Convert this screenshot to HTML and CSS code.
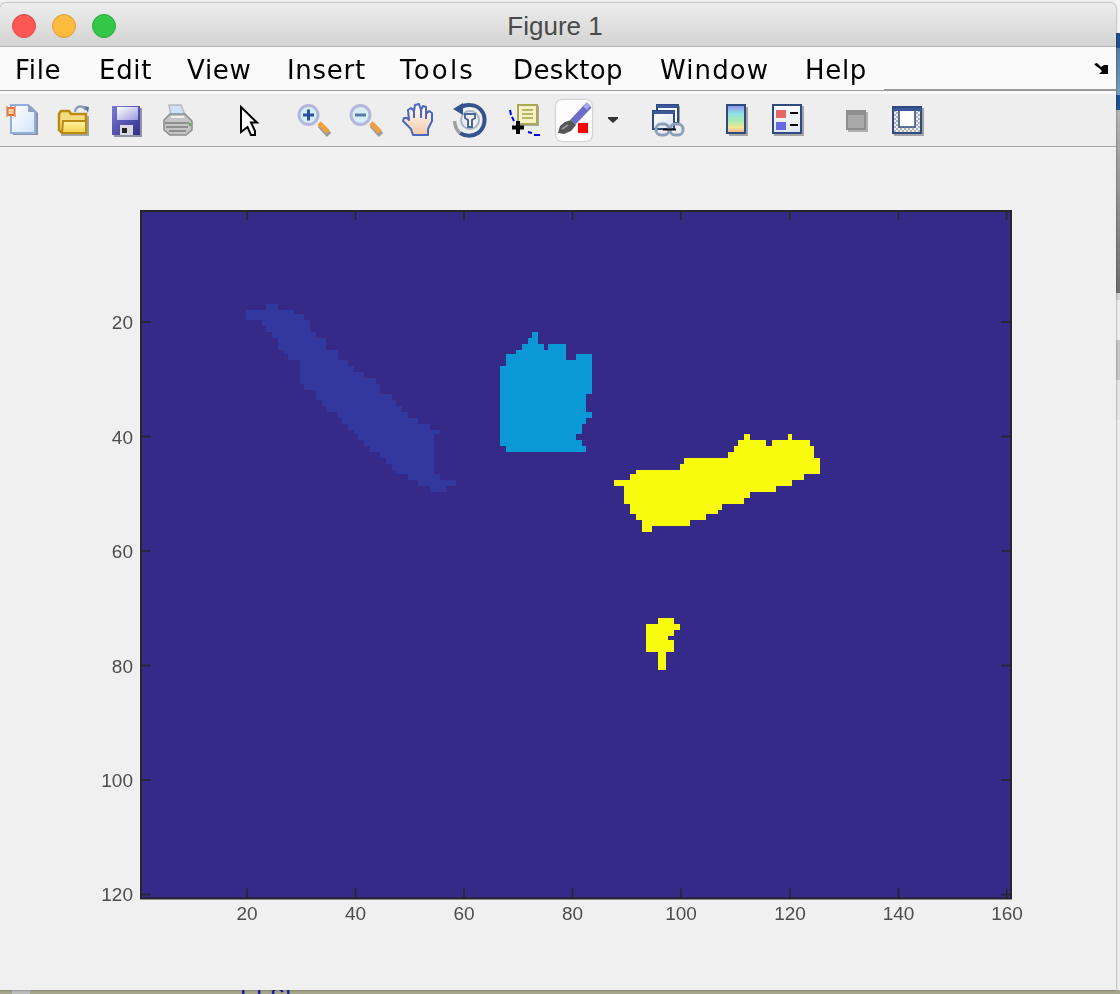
FILE: index.html
```html
<!DOCTYPE html>
<html lang="en">
<head>
<meta charset="utf-8">
<title>Figure 1</title>
<link rel="stylesheet" href="styles.css">
</head>
<body>
<div class="desktop">
  <div class="behind-title">MATLAB R2016b</div>
  <div class="behind-right">
    <i class="seg s1"></i><i class="seg s2"></i><i class="seg s3"></i><i class="seg s4"></i><i class="seg s5"></i><i class="seg s6"></i><i class="seg s7"></i><i class="seg s8"></i><i class="seg s9"></i><i class="seg s10"></i>
  </div>
  <div class="behind-bottom"><span class="gutter"></span><span class="code">ELSE</span></div>

  <div class="window">
    <header class="titlebar">
      <div class="lights"><span class="light red"></span><span class="light yellow"></span><span class="light green"></span></div>
      <div class="title">Figure 1</div>
    </header>

    <nav class="menubar">
      <div class="menu-items"><span>File</span><span>Edit</span><span>View</span><span>Insert</span><span class="wide">Tools</span><span class="snug">Desktop</span><span class="loose">Window</span><span>Help</span></div>
      <div class="menu-end">
        <svg class="dock" width="14" height="11" viewBox="0 0 14 11"><path d="M0 1 3 0 5 2 7 4 10 2H14V11H5L8 8 5 5 2 3Z" fill="#000"/></svg>
      </div>
    </nav>
    <div class="menu-gap"></div>

    <div class="toolbar">
      <!-- new -->
      <span class="slot first"><svg width="36" height="36" viewBox="0 0 36 36">
        <defs><linearGradient id="gDoc" x1="0" y1="0" x2="1" y2="1"><stop offset="0" stop-color="#fff"/><stop offset="1" stop-color="#d5e4f8"/></linearGradient></defs>
        <path d="M9 4H27L34 11V33H9Z" fill="#8c90a6"/>
        <path d="M7 3H24L31 10V31H7Z" fill="url(#gDoc)" stroke="#8fb0dc" stroke-width="2"/>
        <path d="M24 2V10H32Z" fill="#8fa0cc"/>
        <rect x="3.500" y="6" width="7" height="7" fill="#f9d2a8" stroke="#e2763c" stroke-width="2"/>
        <path d="M2 4h2v2H2zM10 4h2v2h-2zM2 13h2v2H2zM10 13h2v2h-2z" fill="#f0a070"/>
      </svg></span>
      <!-- open -->
      <span class="slot"><svg width="36" height="36" viewBox="0 0 36 36">
        <defs><linearGradient id="gFold" x1="0" y1="0" x2="0" y2="1"><stop offset="0" stop-color="#fff4a8"/><stop offset="1" stop-color="#f6d24a"/></linearGradient></defs>
        <path d="M20 10C21 3 28 3 31 8" fill="none" stroke="#8ea0b8" stroke-width="2.500"/>
        <path d="M29 4 34 5 33 11Z" fill="#5a78a0"/>
        <path d="M6 34H34V14H8Z" fill="#a0a8b0"/>
        <path d="M4 12 6 9H14L16 12H31V31H7L4 28Z" fill="#f4dc80" stroke="#b98a10" stroke-width="2.500"/>
        <path d="M8 19H31V31H7Z" fill="url(#gFold)" stroke="#b98a10" stroke-width="2"/>
      </svg></span>
      <!-- save -->
      <span class="slot mid"><svg width="36" height="36" viewBox="0 0 36 36">
        <defs>
          <linearGradient id="gDisk" x1="0" y1="0" x2="1" y2="1"><stop offset="0" stop-color="#7a7ad8"/><stop offset="1" stop-color="#30308a"/></linearGradient>
          <linearGradient id="gLab" x1="0" y1="0" x2="1" y2="1"><stop offset="0" stop-color="#fff"/><stop offset="1" stop-color="#9a9ade"/></linearGradient>
        </defs>
        <rect x="5" y="6" width="28" height="29" fill="#8e93a8"/>
        <rect x="3" y="4" width="28" height="29" fill="url(#gDisk)"/>
        <rect x="8" y="5" width="21" height="13" fill="url(#gLab)"/>
        <rect x="11" y="23" width="13" height="10" fill="#d8d8e0"/>
        <rect x="13" y="26" width="5" height="5" fill="#222"/>
      </svg></span>
      <!-- print -->
      <span class="slot"><svg width="36" height="36" viewBox="0 0 36 36">
        <path d="M9 3H21L25 13H11Z" fill="#cfe2f8" stroke="#b4bac2" stroke-width="1.500"/>
        <path d="M4 18 10 12H25L32 19V28L26 33H10L4 28Z" fill="#c4c4c4" stroke="#8c8c8c" stroke-width="1.500"/>
        <path d="M5 21H29M6 25H28M9 29H26" stroke="#7e7e7e" stroke-width="1.500" fill="none"/>
        <path d="M11 15H24" stroke="#f0f0f0" stroke-width="2"/>
        <rect x="29" y="21" width="2" height="3" fill="#5aa85a"/>
      </svg></span>
      <!-- pointer -->
      <span class="slot gap-19"><svg class="sharp" width="36" height="36" viewBox="0 0 36 36">
        <path d="M10 5 26 20.500H20L24 29V33H20L16.500 25 10 30Z" fill="#fff" stroke="#000" stroke-width="2"/>
      </svg></span>
      <!-- zoom in -->
      <span class="slot gap-13"><svg width="36" height="36" viewBox="0 0 36 36">
        <path d="M23 22 32 32" stroke="#9a9a9a" stroke-width="6" transform="translate(1 1)"/>
        <path d="M23 21 32 30" stroke="#f0a040" stroke-width="5"/>
        <circle cx="12.500" cy="13" r="9.500" fill="#d4edf6" stroke="#b4b6dc" stroke-width="3"/>
        <path d="M7 13H18M12.500 7.500V18.500" stroke="#2e4f9c" stroke-width="3"/>
      </svg></span>
      <!-- zoom out -->
      <span class="slot"><svg width="36" height="36" viewBox="0 0 36 36">
        <path d="M23 22 32 32" stroke="#9a9a9a" stroke-width="6" transform="translate(1 1)"/>
        <path d="M23 21 32 30" stroke="#f0a040" stroke-width="5"/>
        <circle cx="12.500" cy="13" r="9.500" fill="#d4edf6" stroke="#b4b6dc" stroke-width="3"/>
        <path d="M7 13H18" stroke="#5d7ba0" stroke-width="3"/>
      </svg></span>
      <!-- hand -->
      <span class="slot"><svg width="36" height="36" viewBox="0 0 36 36">
        <defs><linearGradient id="gHand" x1="0" y1="0" x2="0" y2="1"><stop offset="0" stop-color="#fff"/><stop offset="1" stop-color="#f3c9a6"/></linearGradient></defs>
        <path d="M13 33 11 27 3 19 4 16H7L9 18 8 8 11 6 14 9 15 3 19 2 21 8 23 4 26 5V12L29 9 32 11V19L28 27V33Z" fill="url(#gHand)" stroke="#4a68c0" stroke-width="2" stroke-linejoin="round"/>
        <path d="M14 9V16M21 8V16M26 12V17" stroke="#4a68c0" stroke-width="2" fill="none"/>
      </svg></span>
      <!-- rotate -->
      <span class="slot"><svg width="36" height="36" viewBox="0 0 36 36">
        <circle cx="18" cy="18" r="9" fill="none" stroke="#aab4c4" stroke-width="2"/>
        <path d="M9 5C14 2 24 2 29 8 35 15 33 26 26 31 20 35 12 34 8 31" fill="none" stroke="#34538c" stroke-width="4"/>
        <path d="M8 31C4 28 3 24 2.500 19" fill="none" stroke="#a0a0a0" stroke-width="3.500"/>
        <path d="M1 7 11 1V13Z" fill="#34538c"/>
        <path d="M13 12H23V16L20 18V25H16V18L13 16Z" fill="none" stroke="#4a6a9a" stroke-width="2"/>
      </svg></span>
      <!-- data cursor -->
      <span class="slot"><svg width="36" height="36" viewBox="0 0 36 36">
        <rect x="16" y="4" width="19" height="20" fill="#aaa"/>
        <rect x="14" y="3" width="19" height="19" fill="#f6f2c4" stroke="#a8a858" stroke-width="2"/>
        <path d="M18 8H29M18 12H29M18 16H29" stroke="#b8b868" stroke-width="2"/>
        <path d="M6 8 7 13M8 15 10 19M24 30 28 31M30 33H36" stroke="#0000e6" stroke-width="2" fill="none"/>
        <path d="M8 25.500H20M14 19V32" stroke="#000" stroke-width="4"/>
      </svg></span>
      <!-- brush -->
      <span class="slot"><span class="brush-btn"><svg width="36" height="41" viewBox="0 0 36 41">
        <path d="M33 5 17 22" stroke="#6c6cc8" stroke-width="7"/>
        <path d="M33 4 29 8" stroke="#a8a8e8" stroke-width="5"/>
        <path d="M15 20 20 25 15 31 8 34 2 33 4 26 9 22Z" fill="#555"/>
        <path d="M6 29 12 25" stroke="#999" stroke-width="2"/>
        <rect x="22" y="23" width="10" height="10" fill="#f00"/>
      </svg></span></span>
      <!-- dropdown -->
      <span class="drop"><svg width="10" height="6" viewBox="0 0 10 6"><path d="M0 0H10V1.500L5 6 0 1.500Z" fill="#333"/></svg></span>
      <!-- link -->
      <span class="slot gap-24"><svg width="36" height="36" viewBox="0 0 36 36">
        <defs><linearGradient id="gWin" x1="0" y1="0" x2="1" y2="1"><stop offset="0" stop-color="#fff"/><stop offset="1" stop-color="#dbe3f3"/></linearGradient></defs>
        <rect x="8" y="4" width="22" height="18" fill="#9aa0a8"/>
        <rect x="7" y="3" width="21" height="18" fill="#fff" stroke="#2f4a80" stroke-width="2"/>
        <rect x="7" y="3" width="21" height="3" fill="#3b5a9c"/>
        <rect x="3" y="9" width="21" height="18" fill="url(#gWin)" stroke="#2f4a80" stroke-width="2"/>
        <rect x="3" y="9" width="21" height="3" fill="#3b5a9c"/>
        <rect x="6" y="22" width="13" height="11" rx="5" fill="none" stroke="#8d9fba" stroke-width="3"/>
        <rect x="20" y="22" width="13" height="11" rx="5" fill="none" stroke="#8d9fba" stroke-width="3"/>
        <path d="M13 27.500H26" stroke="#111" stroke-width="2"/>
      </svg></span>
      <!-- colorbar -->
      <span class="slot gap-17"><svg width="36" height="36" viewBox="0 0 36 36">
        <defs><linearGradient id="gBar" x1="0" y1="0" x2="0" y2="1"><stop offset="0" stop-color="#8c8ce4"/><stop offset=".3" stop-color="#90e0e8"/><stop offset=".55" stop-color="#a4ecb0"/><stop offset=".8" stop-color="#f2e894"/><stop offset="1" stop-color="#eeaa88"/></linearGradient></defs>
        <rect x="10" y="5" width="19" height="29" fill="#a4a4a4"/>
        <rect x="8" y="3" width="18" height="28" fill="url(#gBar)" stroke="#2f4a80" stroke-width="2"/>
      </svg></span>
      <!-- legend -->
      <span class="slot tight"><svg width="36" height="36" viewBox="0 0 36 36">
        <defs><linearGradient id="gLeg" x1="0" y1="0" x2="0" y2="1"><stop offset="0" stop-color="#fff"/><stop offset="1" stop-color="#dde5f5"/></linearGradient></defs>
        <rect x="4" y="4" width="30" height="30" fill="#a4a4a4"/>
        <rect x="3" y="3" width="28" height="28" fill="url(#gLeg)" stroke="#2f4a80" stroke-width="2"/>
        <rect x="6" y="8" width="10" height="8" fill="#e66666"/>
        <rect x="6" y="20" width="10" height="8" fill="#6868e2"/>
        <path d="M20 11H28M20 23H28" stroke="#000" stroke-width="2"/>
      </svg></span>
      <!-- gray -->
      <span class="slot gap-17"><svg width="36" height="36" viewBox="0 0 36 36">
        <rect x="9" y="10" width="20" height="20" fill="#b0b0b0"/>
        <rect x="7" y="8" width="20" height="20" fill="#8f8f8f"/>
        <rect x="9" y="13" width="16" height="13" fill="#a8a8a8"/>
      </svg></span>
      <!-- plot tools -->
      <span class="slot tight"><svg width="36" height="36" viewBox="0 0 36 36">
        <defs><pattern id="pCheck" width="4" height="4" patternUnits="userSpaceOnUse"><rect width="4" height="4" fill="#eee"/><rect width="2" height="2" fill="#b0b0b0"/><rect x="2" y="2" width="2" height="2" fill="#b0b0b0"/></pattern></defs>
        <rect x="4" y="6" width="30" height="28" fill="#a4a4a4"/>
        <rect x="3" y="5" width="28" height="26" fill="url(#pCheck)" stroke="#2f4a80" stroke-width="2"/>
        <rect x="3" y="6" width="28" height="3" fill="#3b5a9c"/>
        <rect x="9" y="9" width="16" height="16" fill="#fff"/>
        <path d="M9 9V25H25V9" fill="none" stroke="#2f4a80" stroke-width="1.500"/>
      </svg></span>
    </div>
    <div class="toolbar-gap"></div>

    <main class="figure">
      <svg class="plot" width="1116" height="842" viewBox="0 148 1116 842">
        <rect class="axes-fill" x="141" y="211" width="870" height="687.500"/>
        <g transform="translate(230 295) scale(.33333)">
          <path class="blob-navy" d="M108 27H144V45H192V57H222V75H240V111H258V129H288V165H324V195H354V213H372V231H402V249H438V267H450V297H486V315H498V333H516V351H534V369H564V387H600V405H630V417H612V537H630V555H678V573H648V591H600V573H564V555H534V537H498V525H486V507H468V489H450V471H420V453H402V435H384V417H372V405H354V387H336V369H324V351H288V333H276V315H258V285H222V267H210V195H174V177H162V165H144V129H126V111H108V93H96V75H48V45H108Z"/>
        </g>
        <g transform="translate(490 320) scale(.33333)">
          <path class="blob-cyan" d="M126 36H144V72H162V90H174V72H228V120H258V102H306V222H288V276H306V294H288V312H276V342H258V360H276V378H288V396H48V378H30V138H48V102H78V90H96V72H114V54H126Z"/>
        </g>
        <g transform="translate(605 425) scale(.33333)">
          <path class="blob-yellow" d="M417 27H435V45H483V63H501V45H549V27H561V45H615V63H627V99H645V147H597V165H561V183H513V201H435V219H417V237H351V255H339V267H303V285H255V303H141V321H111V285H93V267H75V237H57V183H27V165H75V147H93V135H225V117H237V99H369V81H387V63H399V45H417Z"/>
        </g>
        <g transform="translate(630 605) scale(.33333)">
          <path class="blob-yellow" d="M84 39H132V57H150V75H132V93H114V105H132V141H108V195H84V141H48V57H84Z"/>
        </g>

        <path class="ticks" d="M247 211V220M355.500 211V220M464 211V220M572.500 211V220M681 211V220M790 211V220M898.500 211V220M1006.700 211V220
          M247 898V888.500M355.500 898V888.500M464 898V888.500M572.500 898V888.500M681 898V888.500M790 898V888.500M898.500 898V888.500M1006.700 898V888.500
          M141 322H151M141 436.500H151M141 551H151M141 665.500H151M141 780H151M141 894.600H151
          M1011 322H1001M1011 436.500H1001M1011 551H1001M1011 665.500H1001M1011 780H1001M1011 894.600H1001"/>
        <rect class="axes-box" x="141" y="211" width="870" height="687.500"/>

        <g class="xlabels">
          <text x="247" y="920">20</text><text x="355.500" y="920">40</text><text x="464" y="920">60</text><text x="572.500" y="920">80</text><text x="681" y="920">100</text><text x="790" y="920">120</text><text x="898.500" y="920">140</text><text x="1007" y="920">160</text>
        </g>
        <g class="ylabels">
          <text x="133" y="329">20</text><text x="133" y="443.500">40</text><text x="133" y="558">60</text><text x="133" y="672.500">80</text><text x="133" y="787">100</text><text x="133" y="901">120</text>
        </g>
      </svg>
    </main>
  </div>
</div>
</body>
</html>
```
FILE: styles.css
```css
* { box-sizing: border-box; }
html, body { margin: 0; padding: 0; }
.desktop {
  position: relative;
  width: 1120px;
  height: 994px;
  overflow: hidden;
  background: #f2f2f2;
}
.behind-title {
  position: absolute;
  top: -15px;
  left: 465px;
  font: 16px/18px "Liberation Sans", sans-serif;
  letter-spacing: 2px;
  color: #777;
}
.behind-right {
  position: absolute;
  top: 0;
  right: 0;
  width: 4px;
  height: 994px;
  display: flex;
  flex-direction: column;
}
.seg { display: block; }
.s1 { height: 33px; background: #f4f4f4; }
.s2 { height: 15px; background: #1c4f8c; }
.s3 { height: 47px; background: linear-gradient(#4f7dab, #7c9cbd); }
.s4 { height: 15px; background: #1d5190; }
.s5 { height: 183px; background: linear-gradient(#b4b4b4, #6e6e6e); }
.s6 { height: 7px; background: #d4d4d4; }
.s7 { height: 40px; background: #eeeeee; }
.s8 { height: 40px; background: #c8c8c8; }
.s9 { height: 40px; background: #e6e6e6; }
.s10 { flex: 1; background: #efefef; }
.behind-bottom {
  position: absolute;
  left: 0;
  bottom: 0;
  width: 100%;
  height: 4px;
  background: #a6a68c;
  overflow: hidden;
}
.gutter {
  position: absolute;
  left: 12px;
  top: 0;
  width: 18px;
  height: 4px;
  background: #bcbcbc;
}
.code {
  position: absolute;
  left: 240px;
  top: -5px;
  font: 25px/28px "Liberation Mono", monospace;
  color: #1a1aa6;
}

.window {
  position: absolute;
  top: 3px;
  left: 0;
  width: 1116px;
  height: 987px;
  display: flex;
  flex-direction: column;
  background: #f0f0f0;
  border-radius: 6px 6px 0 0;
  box-shadow: 0 0 2px rgba(40, 40, 40, .75);
  overflow: hidden;
}
.titlebar {
  position: relative;
  height: 44px;
  flex: none;
  padding-top: 4px;
  background: linear-gradient(#ededed, #d3d3d3);
  border-bottom: 1px solid #b4b4b4;
}
.lights {
  position: absolute;
  left: 12px;
  top: 11px;
  display: flex;
  gap: 16px;
}
.light {
  width: 24px;
  height: 24px;
  border-radius: 50%;
  border: 1px solid;
}
.red { background: #fc5753; border-color: #df4744; }
.yellow { background: #fdbc40; border-color: #de9f34; }
.green { background: #33c748; border-color: #27aa35; }
.title {
  padding-right: 6px;
  text-align: center;
  font: 26px/39px "Liberation Sans", sans-serif;
  color: #4a4a4a;
}

.menubar {
  height: 44px;
  flex: none;
  display: flex;
  background: #fafafa;
}
.menu-items {
  width: 884px;
  flex: none;
  display: grid;
  grid-template-columns: 84px 88px 100px 113px 113px 147px 145px auto;
  justify-content: start;
  padding: 4px 0 0 15px;
  font: 26px/39px "DejaVu Sans", sans-serif;
  letter-spacing: .7px;
  color: #000;
  border-bottom: 1px solid #9a9a9a;
}
.menu-items span { filter: blur(.25px); white-space: nowrap; }
.menu-items .wide { letter-spacing: 2.200px; }
.menu-items .snug { letter-spacing: .4px; }
.menu-items .loose { letter-spacing: 1.100px; }
.menu-end {
  flex: 1;
  display: flex;
  justify-content: flex-end;
  align-items: flex-start;
  padding: 16px 8px 0 0;
  border-bottom: 2px solid #989898;
}
.menu-gap { height: 3px; flex: none; background: #fafafa; }

.toolbar {
  height: 52px;
  flex: none;
  display: flex;
  align-items: center;
  background: #eeeeee;
}
.slot {
  width: 52px;
  height: 52px;
  flex: none;
  display: flex;
  align-items: center;
  justify-content: center;
}
.slot svg { filter: blur(.35px); }
.slot svg.sharp { filter: none; }
.first { margin-left: -4px; margin-right: -1px; }
.mid { margin-left: 2px; margin-right: -1px; }
.gap-19 { margin-left: 19px; }
.gap-13 { margin-left: 13px; }
.gap-24 { margin-left: 24px; }
.gap-17 { margin-left: 17px; }
.tight { margin-left: -1px; }
.brush-btn {
  width: 36px;
  height: 41px;
  display: flex;
  background: #fcfcfc;
  border-radius: 6px;
  box-shadow: 0 0 2px rgba(0, 0, 0, .4);
}
.drop {
  margin-left: 8px;
  width: 10px;
  height: 6px;
  display: flex;
}
.toolbar-gap {
  height: 2px;
  flex: none;
  background: #f6f6f6;
  border-top: 1px solid #a3a3a3;
}

.figure { flex: 1; display: flex; min-height: 0; }
.plot { display: block; flex: none; }
.axes-fill { fill: #352a87; }
.axes-box { fill: none; stroke: #262626; stroke-width: 2; }
.ticks { fill: none; stroke: #262626; stroke-width: 1.5; }
.blob-navy { fill: #33389e; }
.blob-cyan { fill: #0b99d5; }
.blob-yellow { fill: #f9fb0e; }
.xlabels text, .ylabels text {
  font: 19px "Liberation Sans", sans-serif;
  fill: #4d4d4d;
  filter: blur(.35px);
}
.xlabels text { text-anchor: middle; }
.ylabels text { text-anchor: end; }
```
